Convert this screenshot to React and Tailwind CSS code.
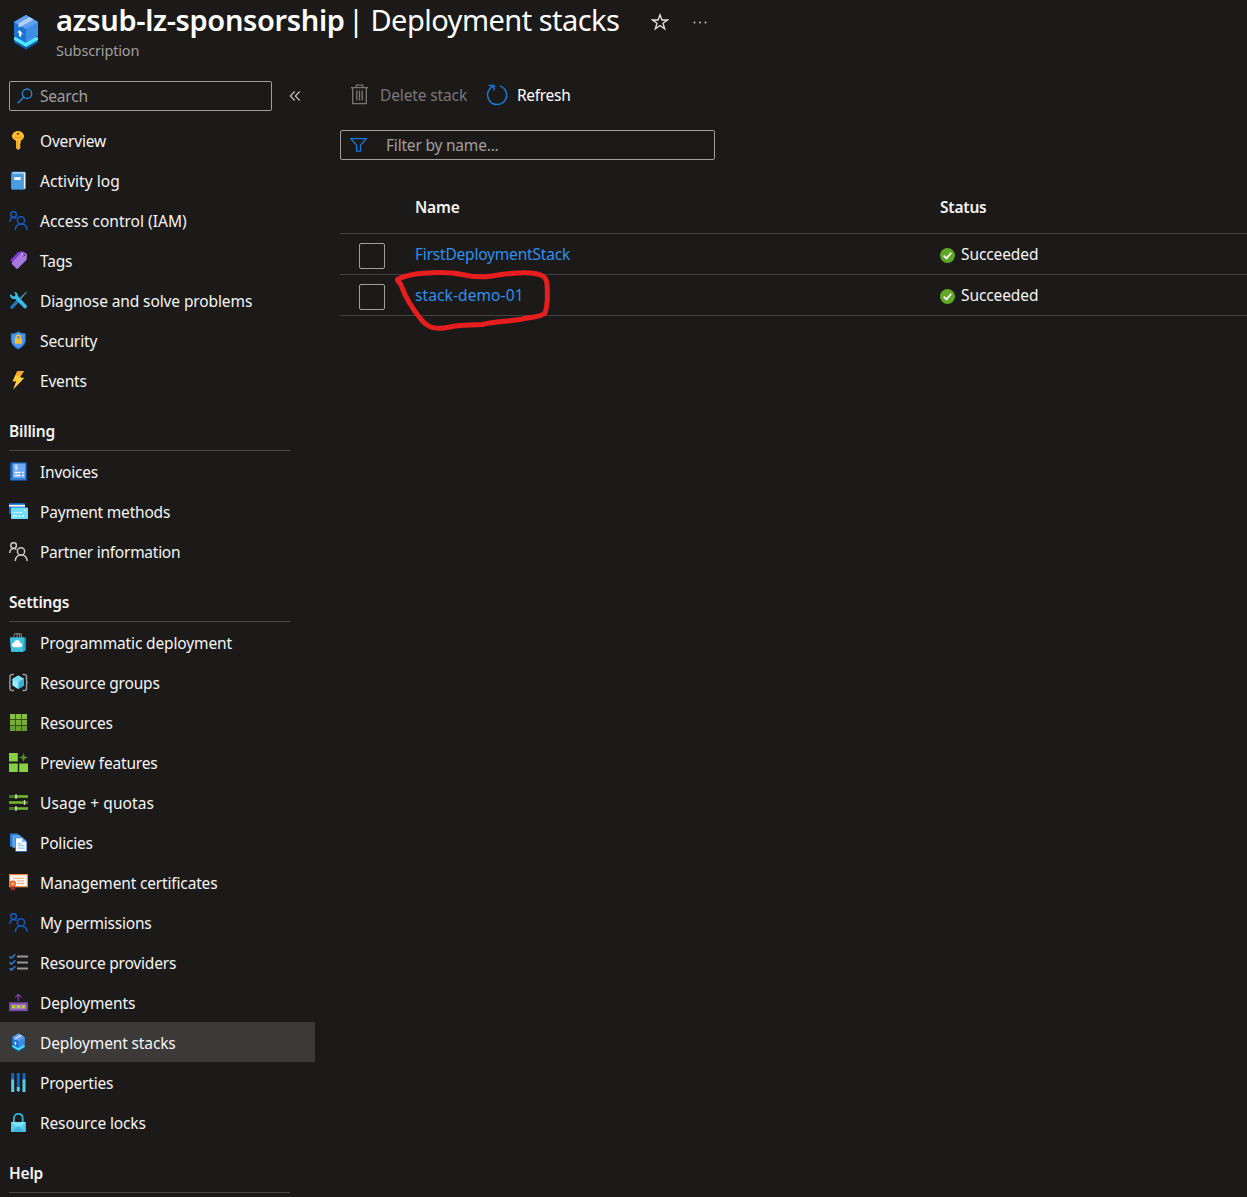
import React from "react";

const Svg = ({ children, className = "w-[19px] h-[19px] mt-px" }) => (
  <svg viewBox="0 0 19 19" className={`${className} shrink-0`} fill="none">{children}</svg>
);

const People = ({ color }) => (
  <Svg>
    <g stroke={color} strokeWidth="1.5">
      <circle cx="4.6" cy="3.5" r="2.800" />
      <path d="M.7 11C.9 8.200 2.400 6.400 4.600 6.400c1.200 0 2.200.4 2.900 1.200" />
      <circle cx="12" cy="9.400" r="3.600" />
      <path d="M6.200 19c.4-3.700 2.800-5.900 5.900-5.900s5.600 2.200 6.200 5.900" />
    </g>
  </Svg>
);

const StackCube = ({ className }) => (
  <svg viewBox="0 0 26 36" className={`${className} shrink-0`} fill="none">
    <path d="M1 27 13 20l12 7v1.600L13 35.600 1 28.600z" fill="#0f5ca8" />
    <path d="M1 23.500 13 17l12 6.500v2.500L13 33 1 26z" fill="#50e6ff" />
    <path d="M13 1 25 8v14L13 28.800 1 22V8z" fill="#3f8ee6" />
    <path d="M1 8l12 7v13.800L1 22z" fill="#1b74d2" />
    <path d="M13 1 25 8l-12 7L1 8z" fill="#5ea0ef" />
    <path d="M16.500 3 20.500 5.400 8.200 12.500 5.500 13.500 5.500 9.600z" fill="#b4cff8" />
    <path d="M6.800 16.300 10 20.400l-1.900-.7v3.400l-2-1.100v-3.300l-1.900-.4z" fill="#fff" />
  </svg>
);

const icons = {
  key: (
    <Svg>
      <path d="M9 0c3.200 0 6 2.500 6 5.300 0 2-1.300 3.400-3.300 4.500v2.500l-1 1 1 1.200-1 1.100 1 1.200L9 19l-2-2V9.800C4.500 8.700 3 7.300 3 5.300 3 2.500 5.800 0 9 0z" fill="#fdbd30" />
      <circle cx="9" cy="2.800" r="1.300" fill="#8a5600" />
      <path d="M5.300 6.700h7.400M8.300 10v7.300" stroke="#e08c15" strokeWidth=".9" />
    </Svg>
  ),
  book: (
    <Svg>
      <path d="M2 2.200C2 1.200 2.700.6 3.700.6H16v18H3.700c-1 0-1.700-.6-1.700-1.600z" fill="#1a6bbd" />
      <path d="M3.500 1.300h13v16.500h-13z" fill="#e8f2fc" />
      <path d="M2.200 2.600h12.700v15.900H3.600c-.8 0-1.400-.5-1.400-1.300z" fill="#4a9ee0" />
      <path d="M5.200 6.200h6.500v2.700H5.200z" fill="#fff" />
    </Svg>
  ),
  people: <People color="#1559bd" />,
  partner: <People color="#c8c6c4" />,
  tag: (
    <Svg>
      <path d="M9.200.8 15 .4l1.500 1.700L5.500 13.800 1.300 9.200z" fill="#7a3bd6" />
      <path d="M11.500 2.600 17 2.200l1 1.200-.4 5.300L9 17.600c-.6.5-1.200.5-1.700 0l-4.200-4.300c-.6-.6-.6-1.200 0-1.700z" fill="#a678dc" />
      <circle cx="15" cy="4.800" r="1.300" fill="#3b1a70" />
      <path d="M12.800 1.300c.3 2.500 1.200 3.800 3 4.200" stroke="#e6d7f8" strokeWidth=".9" />
    </Svg>
  ),
  tools: (
    <Svg>
      <path d="M17.300.6 18 1.300 12 8.200l-1.600-1.300z" fill="#4b8ba8" />
      <path d="M8 8.600l2.200 2.100-6 6.600c-.8.8-1.800.8-2.500.1s-.7-1.600 0-2.400z" fill="#1f78bd" />
      <path d="M5.200.7C7.500.8 9 2.600 8.900 5.100l8.400 9c.8.9.8 2 .1 2.700-.8.800-1.900.8-2.700-.1L6.200 8C3.500 8.500 1.300 7 1 4.200L1.500 3l2.800 2.400 1.800-.4.300-1.700z" fill="#35bde5" />
    </Svg>
  ),
  shield: (
    <Svg>
      <path d="M9.300.2c2.200 1.600 4.500 2 7.500 2v6.600c0 4.500-3.300 7.700-7.500 9.800-4.200-2.100-7.500-5.300-7.500-9.800V2.200c3 0 5.300-.4 7.500-2z" fill="#1f6fc0" />
      <path d="M9.300 1.300c2 1.400 4.100 1.800 6.600 1.900v5.600c0 3.900-2.900 6.700-6.600 8.600-3.700-1.900-6.600-4.700-6.600-8.600V3.200c2.500-.1 4.600-.5 6.600-1.900z" fill="#4a96ea" />
      <path d="M7.100 8V6.500c0-1.400.9-2.300 2.200-2.300s2.200.9 2.200 2.300V8" stroke="#fcc24d" strokeWidth="1.300" />
      <rect x="5.800" y="7.400" width="7" height="5.400" rx=".6" fill="#fdbd30" />
    </Svg>
  ),
  bolt: (
    <Svg>
      <path d="M8.200 0h6.900l-4.400 6.800h4.500L4 18.800l3.200-8.300H3.400z" fill="#fbab28" />
      <path d="M7.500 9.700H4.100l2.500-5.500 8 3.300L4.900 17.600z" fill="#ffcf3c" />
    </Svg>
  ),
  invoice: (
    <Svg>
      <rect x="1" y=".2" width="16.800" height="18.600" rx=".8" fill="#155ba8" />
      <path d="M3.500 1.500h13v14.800h-13z" fill="#6fa9f4" />
      <path d="M1.800 16.500h15.200v1.200H1.800z" fill="#4b8ddd" />
      <path d="M8.600 3.300H6.200v2h2.200v2H5.800M7.200 2.500v5.700" stroke="#dbe9fc" strokeWidth=".9" />
      <path d="M5.500 10.500h6M13 10.500h1.800M5.500 13.500h6M13 13.500h1.800" stroke="#fff" strokeWidth="1.400" />
    </Svg>
  ),
  card: (
    <Svg>
      <rect x="0" y="1" width="16" height="11" rx=".8" fill="#1464bd" />
      <path d="M0 2.800h16v1.800H0z" fill="#fff" />
      <rect x="2" y="5.500" width="17" height="11.500" rx=".8" fill="#70def8" />
      <path d="M4 10.500h2.500m1 0h2.500m1 0h2M4 14.200h4m1.500 0h2m1.500 0h2M15 8.300h2" stroke="#e6fbff" strokeWidth="1.200" />
    </Svg>
  ),
  bag: (
    <Svg>
      <path d="M5 5V2.200C5 .8 5.800.6 7 .6h1.500c1.300 0 2 .4 2 1.600V5M8 5V2.200C8 .8 9 .6 10 .6c1.500 0 2.500.4 2.500 1.600V5" stroke="#777" strokeWidth="1.100" />
      <path d="M1 4.500h15.800v13L14 18.800H2z" fill="#249cba" />
      <path d="M1 4.500h14l-.8 14.300H2.200z" fill="#40c3e0" />
      <path d="M5.300 14.200c-1.600 0-2.500-1-2.500-2.200 0-1.300 1-2.200 2.200-2.200.3-1.700 1.500-2.700 3.100-2.700 1.700 0 2.900 1.200 3.100 2.900 1.300.1 2.100 1 2.100 2.100s-.9 2.100-2.300 2.100z" fill="#fff" />
    </Svg>
  ),
  group: (
    <Svg>
      <path d="M5 1.400H3.200C1.800 1.400 1 2 1 3.400v3.800c0 1.200-.2 1.900-.6 2.300.4.400.6 1.100.6 2.300v3.800c0 1.400.8 2 2.200 2H5M13.500 1.400h1.800c1.400 0 2.200.6 2.200 2v3.800c0 1.200.2 1.900.6 2.300-.4.400-.6 1.100-.6 2.300v3.800c0 1.400-.8 2-2.200 2h-1.800" stroke="#999" strokeWidth="1.500" />
      <path d="M9.300 2.500 15 5.800v6.800l-5.700 3.500-5.700-3.500V5.800z" fill="#50d2f0" />
      <path d="M9.300 2.500 15 5.800 9.300 9.200 3.600 5.800z" fill="#7ddcf5" />
      <path d="M9.300 9.200 15 5.800v6.800l-5.700 3.500z" fill="#32b1dc" />
      <path d="M3.600 5.800 9.300 9.200v6.900l-5.700-3.500z" fill="#9deaff" />
    </Svg>
  ),
  grid: (
    <Svg>
      <rect x="1" y="1" width="17" height="17" rx=".6" fill="#2f5114" />
      <path d="M1 1h5.100v5.100H1zM7 1h5.100v5.100H7zM13 1h5v5.100h-5z" fill="#86bd3d" />
      <path d="M1 7h5.100v5.100H1zM7 7h5.100v5.100H7zM13 7h5v5.100h-5z" fill="#78ad35" />
      <path d="M1 13h5.100v5H1zM7 13h5.100v5H7zM13 13h5v5h-5z" fill="#6a9e2e" />
    </Svg>
  ),
  preview: (
    <Svg>
      <path d="M0 0h8.800v8.600H0zM0 10.400h8.800V19H0zM10.200 10.400H19V19h-8.800z" fill="#86d143" />
      <path d="M14.500 0l1.200 3.200L19 4.500l-3.300 1.200-1.200 3.300-1.200-3.300L10 4.500l3.300-1.300z" fill="#588e2b" />
    </Svg>
  ),
  sliders: (
    <Svg>
      <path d="M0 3.500h19M0 9.500h19M0 15.500h19" stroke="#467a1d" strokeWidth="3" />
      <path d="M8 3.500h11M0 9.500h14M8 15.500h11" stroke="#76b330" strokeWidth="2" />
      <path d="M7 1.300v4.400M15.500 7.300v4.400M7 13.300v4.400" stroke="#e1eed4" strokeWidth="1.500" />
    </Svg>
  ),
  policies: (
    <Svg>
      <path d="M1 .5h7.500l2 2v11H1z" fill="#2b7dd4" />
      <path d="M3.500 2.300H11l2.500 2.500v10h-10z" fill="#64a5f0" />
      <path d="M6.200 4.300h7.500l4.300 4.300v10.100H6.200z" fill="#3f87da" />
      <path d="M7 5.200h6l4.200 4.100v8.600H7z" fill="#fff" />
      <path d="M13 5v4.300h4.300z" fill="#8abaf2" />
      <path d="M8.700 10.500h4m-4 2.200h7m-7 2.400h7" stroke="#9cc2f5" strokeWidth="1.300" />
    </Svg>
  ),
  cert: (
    <Svg>
      <path d="M0 1h19v13.300H0z" fill="#f08b42" />
      <path d="M1.200 2.200h16.600v10.900H1.200z" fill="#fff7f0" />
      <path d="M4 5.200h11M8 8h7M8 10.500h7" stroke="#e7a984" strokeWidth="1.100" />
      <path d="M1.700 12.500h4.300v5.200l-2.200-1.200-2.100 1.200z" fill="#a32f25" />
      <circle cx="3.700" cy="10.800" r="3.200" fill="#e05a30" />
      <circle cx="3.700" cy="10.800" r="1.900" fill="#ffa04d" />
    </Svg>
  ),
  checks: (
    <Svg>
      <path d="M8 3.500h11M8 9.500h11M8 15.500h11" stroke="#9a9896" strokeWidth="2" />
      <path d="M.5 3.300 2.400 5.200 6.300 1.300M.5 9.300l1.900 1.900 3.900-3.900M.5 15.200l1.900 1.900 3.900-3.900" stroke="#2f7fd0" strokeWidth="1.600" />
    </Svg>
  ),
  deploy: (
    <Svg>
      <path d="M9.300 8V2M6.200 4.400 9.300 1.300l3.100 3.100" stroke="#75479c" strokeWidth="1.300" />
      <path d="M0 9.200h19v9H0z" fill="#7a4aa3" />
      <path d="M1.800 11h15.400v5.500H1.800z" fill="#9c75bd" />
      <path d="M3 12.300h3.300v3H3zM7.800 12.300h3.300v3H7.800zM12.500 12.300h3.300v3h-3.300z" fill="#b7d432" />
    </Svg>
  ),
  stacks: (
    <div className="w-[19px] flex justify-center shrink-0">
      <StackCube className="w-[15px] h-[19px]" />
    </div>
  ),
  props: (
    <Svg>
      <path d="M3.700 0v8M9.300 0v14M15 0v8" stroke="#1665bd" strokeWidth="3" />
      <path d="M2.200 7.200l.6-.9h1.800l.6.9V19h-3zM13.500 7.200l.6-.9h1.800l.6.9V19h-3z" fill="#50cdea" />
      <path d="M7.800 14h3v3.500L9.300 19l-1.500-1.500z" fill="#50cdea" />
    </Svg>
  ),
  lock: (
    <Svg>
      <path d="M4.900 9.500V5.300C4.900 2.600 6.700.9 9.300.9s4.400 1.700 4.400 4.400v4.200" stroke="#32b4d4" strokeWidth="1.800" />
      <rect x="2" y="9" width="14.800" height="10" rx=".6" fill="#58cfee" />
      <path d="M2 9.300 9.300 15l7.500-5.700v-.3H2z" fill="#7be4fb" />
      <path d="M2 18.800 9.300 13l7.500 5.800z" fill="#41b4dc" />
    </Svg>
  ),
};

const NavItem = ({ icon, label, tracking = "", selected }) => (
  <a className={`flex h-10 items-center pl-[9px] ${selected ? "bg-[#3b3a39]" : ""}`}>
    {icons[icon]}
    <span className={`ml-3 pt-px whitespace-nowrap leading-5 ${tracking}`}>{label}</span>
  </a>
);

const Heading = ({ children }) => (
  <h2 className="ml-[9px] mr-[25px] h-[51px] border-b border-[#4a4948] pt-[21px] leading-5 font-semibold">{children}</h2>
);

const general = [
  ["key", "Overview"],
  ["book", "Activity log", "tracking-[0.05px]"],
  ["people", "Access control (IAM)", "tracking-[0.01px]"],
  ["tag", "Tags"],
  ["tools", "Diagnose and solve problems", "tracking-[-0.11px]"],
  ["shield", "Security", "tracking-[-0.1px]"],
  ["bolt", "Events"],
];
const billing = [
  ["invoice", "Invoices"],
  ["card", "Payment methods"],
  ["partner", "Partner information", "tracking-[-0.26px]"],
];
const settings = [
  ["bag", "Programmatic deployment", "tracking-[-0.14px]"],
  ["group", "Resource groups"],
  ["grid", "Resources"],
  ["preview", "Preview features"],
  ["sliders", "Usage + quotas", "tracking-[0.08px]"],
  ["policies", "Policies"],
  ["cert", "Management certificates", "tracking-[-0.16px]"],
  ["people", "My permissions"],
  ["checks", "Resource providers"],
  ["deploy", "Deployments", "tracking-[-0.1px]"],
  ["stacks", "Deployment stacks", "tracking-[-0.13px]"],
  ["props", "Properties"],
  ["lock", "Resource locks", "tracking-[-0.13px]"],
];

const NavList = ({ items }) =>
  items.map(([icon, label, tracking]) => (
    <NavItem key={label} icon={icon} label={label} tracking={tracking} selected={label === "Deployment stacks"} />
  ));

const Row = ({ name, circled }) => (
  <div className="flex h-[41px] items-start border-b border-[#444342]">
    <div className="ml-[19px] mt-[9px] h-[26px] w-[26px] rounded-[2px] border border-[#a19f9d]" />
    <div className={`relative ml-[30px] mt-[10px] w-[525px] leading-5 text-[#2f8fec] ${circled ? "tracking-[0.1px]" : ""}`}>
      {name}
      {circled && (
        <svg className="absolute -left-[25px] -top-[20px]" width="165" height="70" viewBox="390 265 165 70" fill="none">
          <path
            d="M397.500 279.500C405 275.500 414 274 424 273.300C436 272.300 452 272.500 462 274.500C470 276.500 480 277.800 492 276C503 274.300 515 272.600 525 272.700C540 273 546.500 275.500 547 284C547.800 296 547.500 306 545 313C542 317 532 316.500 521 319.300C508 321.500 495 321.500 482 324.500C470 325.500 460 324.500 450 327C438 329.500 429 329 422 320.500C411 307 405 297 401.500 286C400.500 282.500 397 281.500 397.500 279.500Z"
            stroke="#e61e1e"
            strokeWidth="5"
            strokeLinejoin="round"
          />
        </svg>
      )}
    </div>
    <div className="mt-[10px] flex items-center leading-5 tracking-[-0.1px]">
      <svg viewBox="0 0 15 15" className="mt-[3px] mr-[6px] h-[15px] w-[15px]" fill="none">
        <circle cx="7.500" cy="7.500" r="7.500" fill="#5ea624" />
        <path d="M3.700 7.600 6.500 10.400 11.300 4.700" stroke="#fff" strokeWidth="1.700" />
      </svg>
      Succeeded
    </div>
  </div>
);

export default function App() {
  return (
    <div className="h-[1197px] w-[1247px] overflow-hidden bg-[#1b1a19] font-['Noto_Sans','Open_Sans',sans-serif] text-[15.5px] tracking-[-0.2px] text-[#f5f4f3]">
      <header className="flex h-[81px] items-start pl-[13px]">
        <StackCube className="mt-[14px] h-[36px] w-[26px]" />
        <div className="ml-[17px]">
          <h1 className="flex h-10 whitespace-pre text-[29px] leading-10 text-white">
            <span className="w-[292px] font-semibold tracking-[-0.35px]">azsub-lz-sponsorship</span>
            <span className="w-[271px] tracking-[-0.53px]">| Deployment stacks</span>
          </h1>
          <div className="text-[14.5px] leading-5 tracking-[-0.15px] text-[#a19f9d]">Subscription</div>
        </div>
        <svg viewBox="0 0 18 18" className="ml-[32px] mt-[13px] h-[18px] w-[18px]" fill="none" stroke="#e8e6e4" strokeWidth="1.300">
          <path d="M9 1.800 10.900 7H16.500L12 10.300 13.700 15.800 9 12.500 4.300 15.800 6 10.300 1.500 7H7.100z" />
        </svg>
        <svg viewBox="0 0 14 4" className="ml-[24px] mt-[20px] h-[4px] w-[14px]" fill="#d0cecc">
          <circle cx="1.500" cy="2.500" r=".9" />
          <circle cx="7" cy="2.500" r=".9" />
          <circle cx="12.500" cy="2.500" r=".9" />
        </svg>
      </header>

      <div className="flex">
        <nav className="w-[315px] shrink-0">
          <div className="flex h-[39px] items-start pl-[9px]">
            <div className="flex h-[30px] w-[263px] items-center rounded-[2px] border border-[#a19f9d] pl-[7px] text-[#a19f9d]">
              <svg viewBox="0 0 16 16" className="h-4 w-4" fill="none" stroke="#2b88d8" strokeWidth="1.300">
                <circle cx="10" cy="5.700" r="4.700" />
                <path d="M6.700 9.200.6 15.300" />
              </svg>
              <span className="ml-[7px] pt-px">Search</span>
            </div>
            <svg viewBox="0 0 12 12" className="ml-[17px] mt-[9px] h-3 w-3" fill="none" stroke="#c8c6c4" strokeWidth="1.100">
              <path d="M5.700 1.500 1.300 6l4.400 4.500M10.700 1.500 6.300 6l4.400 4.500" />
            </svg>
          </div>
          <NavList items={general} />
          <Heading>Billing</Heading>
          <NavList items={billing} />
          <Heading>Settings</Heading>
          <NavList items={settings} />
          <Heading>Help</Heading>
        </nav>

        <main className="ml-[25px] flex-1">
          <div className="flex h-[49px] items-start pl-[11px] leading-[29px]">
            <svg viewBox="0 0 17 21" className="mt-[3px] h-[21px] w-[17px]" fill="none" stroke="#797775" strokeWidth="1.300">
              <path d="M0 3.600h17M5.300 3.300V1.200h6.400v2.100M1.700 3.600v16h13.600v-16" />
              <path d="M5.800 6.500v10M8.500 6.500v10M11.200 6.500v10" />
            </svg>
            <span className="ml-3 w-[106px] tracking-[-0.13px] text-[#797775]">Delete stack</span>
            <svg viewBox="0 0 22 22" className="mt-[3px] h-[22px] w-[22px]" fill="none" stroke="#1a76d6" strokeWidth="1.500">
              <path d="M13.700 1.900a9.500 9.500 0 1 1-6.800.6" />
              <path d="M2.700 1.500H8v5" />
            </svg>
            <span className="ml-[9px] tracking-[-0.3px] text-white">Refresh</span>
          </div>
          <div className="flex h-[30px] w-[375px] items-center rounded-[2px] border border-[#a19f9d] pl-[9px] text-[#a19f9d]">
            <svg viewBox="0 0 18 16" className="h-4 w-[18px]" fill="none" stroke="#1a76d6" strokeWidth="1.300">
              <path d="M.8 1.600h15.400l-5.700 6.700v5.900H6.600V8.300z" />
            </svg>
            <span className="ml-[18px] pt-px">Filter by name...</span>
          </div>
          <div className="mt-[22px] flex h-[52px] border-b border-[#444342] pl-[75px] pt-[15px] leading-5 font-semibold">
            <span className="w-[525px]">Name</span>
            <span>Status</span>
          </div>
          <Row name="FirstDeploymentStack" />
          <Row name="stack-demo-01" circled />
        </main>
      </div>
    </div>
  );
}
